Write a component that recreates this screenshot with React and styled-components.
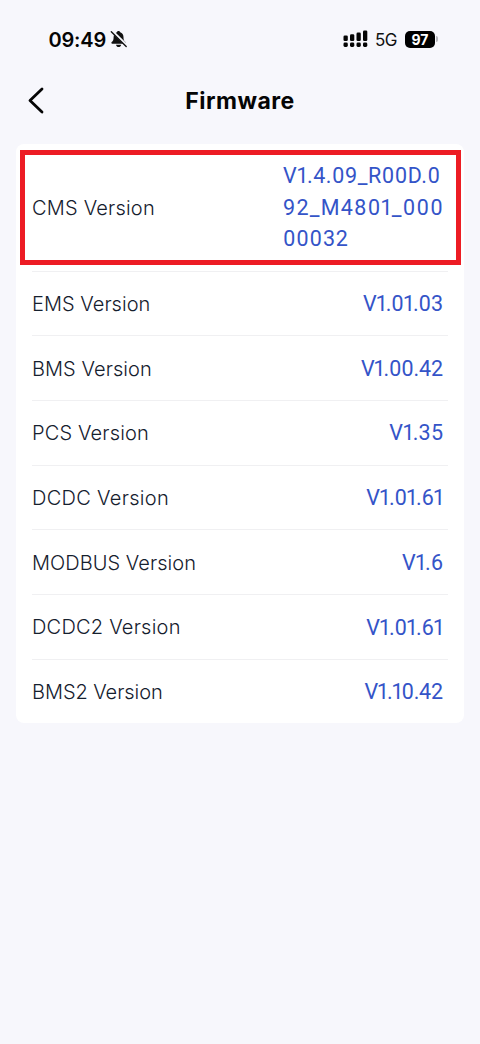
import { styled, createGlobalStyle } from 'styled-components';

const GlobalStyle = createGlobalStyle`
    * {
        box-sizing: border-box;
    }
    body {
        margin: 0;
        background-color: #f7f7fc;
        font-family: 'Inter', 'Liberation Sans', sans-serif;
    }
`;
const Screen = styled.main`
    min-height: 1044px;
    background-color: #f7f7fc;
`;
const StatusBar = styled.div`
    display: flex;
    align-items: center;
    justify-content: space-between;
    height: 78px;
    padding: 0 42px 0 48px;
`;
const StatusGroup = styled.div`
    display: flex;
    align-items: center;
`;
const Time = styled.span`
    width: 62px;
    font-size: 20px;
    font-weight: 600;
    white-space: nowrap;
    letter-spacing: -0.2px;
    padding: 1px 0 0 0.5px;
    color: #050505;
`;
const Network = styled.span`
    width: 30px;
    font-size: 17px;
    margin-left: 7px;
    padding-top: 1px;
    letter-spacing: -0.5px;
    color: #111;
`;
const Battery = styled.span`
    display: flex;
    align-items: center;
    justify-content: center;
    width: 30px;
    height: 17px;
    border-radius: 5px;
    font-size: 14px;
    font-weight: 700;
    color: #fff;
    background-color: #000;
`;
const BatteryTip = styled.span`
    width: 2px;
    height: 6px;
    margin-left: 1px;
    border-radius: 0 2px 2px 0;
    background-color: #b5b5ba;
`;
const Header = styled.header`
    display: grid;
    grid-template-columns: 52px 1fr 52px;
    align-items: center;
    height: 46px;
`;
const BackButton = styled.button`
    display: flex;
    padding: 0 0 0 27px;
    border: 0;
    background: none;
`;
const Title = styled.h1`
    margin: 0;
    font-size: 23px;
    font-weight: 700;
    text-align: center;
    letter-spacing: 0.5px;
    color: #050505;
`;
const Card = styled.section`
    margin: 19.5px 16px 0;
    padding: 0 16px;
    border-radius: 8px;
    background-color: #fff;
`;
const Row = styled.div`
    position: relative;
    display: flex;
    align-items: center;
    justify-content: space-between;
    height: ${(props) => (props.$tall ? '128px' : '64.7px')};
    padding: 1px 5px 0 0;
    border-bottom: 1px solid #f0f0f2;
    &:last-child {
        height: 63.5px;
        border-bottom: 0;
    }
`;
const Label = styled.span`
    font-size: 20px;
    font-weight: 300;
    letter-spacing: ${(props) => props.$spacing}px;
    color: #15202e;
`;
const Value = styled.span`
    font-family: 'Roboto', 'Liberation Sans', sans-serif;
    font-size: 21.5px;
    font-feature-settings: 'pnum';
    line-height: 31.5px;
    letter-spacing: ${(props) => props.$spacing}px;
    margin-right: ${(props) => -props.$spacing}px;
    white-space: nowrap;
    color: #3454c8;
`;
const Lines = styled.div`
    display: flex;
    flex-direction: column;
    width: 160px;
`;
const Highlight = styled.div`
    position: absolute;
    top: 6.5px;
    left: -12px;
    width: 441px;
    height: 115px;
    border: 5px solid #ed1c24;
    pointer-events: none;
`;

const versions = [
    { label: 'EMS Version', value: 'V1.01.03', labelSpacing: 0.03, spacing: -0.1 },
    { label: 'BMS Version', value: 'V1.00.42', labelSpacing: 0.06, spacing: -0.2 },
    { label: 'PCS Version', value: 'V1.35', labelSpacing: 0.15, spacing: 0.2 },
    { label: 'DCDC Version', value: 'V1.01.61', labelSpacing: 0.3, spacing: -0.15 },
    { label: 'MODBUS Version', value: 'V1.6', labelSpacing: 0.04, spacing: 0 },
    { label: 'DCDC2 Version', value: 'V1.01.61', labelSpacing: 0.23, spacing: -0.15 },
    { label: 'BMS2 Version', value: 'V1.10.42', labelSpacing: -0.06, spacing: -0.25 },
];

function MutedBell() {
    return (
        <svg width="18" height="20" viewBox="0 0 18 20">
            <path d="M8.5 2c-1 0-1.5.6-1.6 1.3C4.7 4 3.7 5.7 3.6 8.3c0 2.7-.5 3.5-1.9 4.8-.6.6-.4 1.6.5 1.6h12.7c.9 0 1.1-1 .5-1.6-1.4-1.3-1.9-2.1-1.9-4.8 0-2.6-1.2-4.3-3.3-5C10 2.6 9.500 2 8.500 2Z" fill="#111" />
            <path d="M6 15.700h5.200c-.3 1.500-1.300 2.300-2.600 2.300S6.300 17.200 6 15.700Z" fill="#111" />
            <path d="M2.300 2.300 17.300 17" stroke="#f7f7fc" strokeWidth="2.600" />
            <path d="M1.300 2.800 16.200 17.500" stroke="#111" strokeWidth="1.400" strokeLinecap="round" />
        </svg>
    );
}

function Signal() {
    return (
        <svg width="25" height="18" viewBox="0 0 25 18" fill="#050505">
            <rect x="0.500" y="5.500" width="4.300" height="5.500" rx="1.300" />
            <rect x="7" y="4.200" width="4.300" height="6.800" rx="1.300" />
            <rect x="13.500" y="2.600" width="4.300" height="8.400" rx="1.300" />
            <rect x="20" y="0.500" width="4.300" height="10.500" rx="1.300" />
            <rect x="0.500" y="12.500" width="4.300" height="4.500" rx="1.400" />
            <rect x="7" y="12.500" width="4.300" height="4.500" rx="1.400" />
            <rect x="13.500" y="12.500" width="4.300" height="4.500" rx="1.400" />
            <rect x="20" y="12.500" width="4.300" height="4.500" rx="1.400" />
        </svg>
    );
}

function App() {
    return (
        <Screen>
            <GlobalStyle />
            <StatusBar>
                <StatusGroup>
                    <Time>09:49</Time>
                    <MutedBell />
                </StatusGroup>
                <StatusGroup>
                    <Signal />
                    <Network>5G</Network>
                    <Battery>97</Battery>
                    <BatteryTip />
                </StatusGroup>
            </StatusBar>
            <Header>
                <BackButton aria-label="Back">
                    <svg width="18" height="28" viewBox="0 0 18 28" fill="none">
                        <path d="M15 2 3 13.500l12 11.500" stroke="#050505" strokeWidth="2.800" strokeLinecap="round" strokeLinejoin="round" />
                    </svg>
                </BackButton>
                <Title>Firmware</Title>
            </Header>
            <Card>
                <Row $tall>
                    <Label $spacing={0.2}>CMS Version</Label>
                    <Lines>
                        <Value $spacing={0.5}>V1.4.09_R00D.0</Value>
                        <Value $spacing={1.2}>92_M4801_000</Value>
                        <Value $spacing={0.8}>00032</Value>
                    </Lines>
                    <Highlight />
                </Row>
                {versions.map((item) => (
                    <Row key={item.label}>
                        <Label $spacing={item.labelSpacing}>{item.label}</Label>
                        <Value $spacing={item.spacing}>{item.value}</Value>
                    </Row>
                ))}
            </Card>
        </Screen>
    );
}

export default App;
